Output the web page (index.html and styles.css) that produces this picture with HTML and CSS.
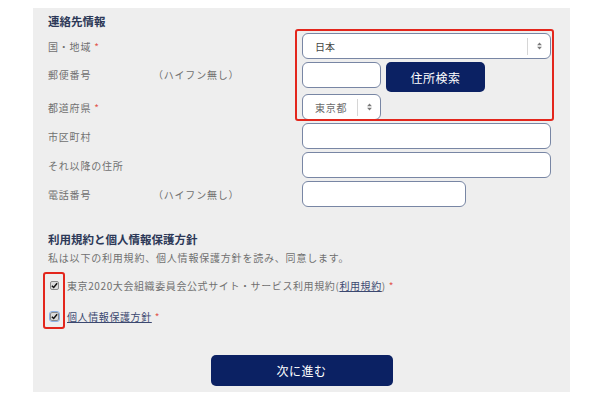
FILE: index.html
```html
<!DOCTYPE html>
<html>

<head>
    <meta charset="UTF-8">
    <title>連絡先情報</title>
    <link rel="stylesheet" href="styles.css">
</head>

<body>
    <div id="panel">
        <div class="section-title">連絡先情報</div>

        <div class="form-rows">
            <div class="row">
                <span class="label">国・地域 <span class="req">*</span></span>
                <span class="hint"></span>
                <div class="select select-country">
                    <span class="select-value">日本</span>
                    <span class="select-arrows">
                        <svg width="5" height="8" viewBox="0 0 6 10"><polygon points="0,4 3,0.5 6,4" /><polygon points="0,6 3,9.5 6,6" /></svg>
                    </span>
                </div>
            </div>
            <div class="row row-tall">
                <span class="label">郵便番号</span>
                <span class="hint">（ハイフン無し）</span>
                <div class="control-group">
                    <input class="text-input input-zip" type="text">
                    <button class="btn btn-search">住所検索</button>
                </div>
            </div>
            <div class="row">
                <span class="label">都道府県 <span class="req">*</span></span>
                <span class="hint"></span>
                <div class="select select-pref">
                    <span class="select-value muted">東京都</span>
                    <span class="select-arrows">
                        <svg width="5" height="8" viewBox="0 0 6 10"><polygon points="0,4 3,0.5 6,4" /><polygon points="0,6 3,9.5 6,6" /></svg>
                    </span>
                </div>
            </div>
            <div class="row">
                <span class="label">市区町村</span>
                <span class="hint"></span>
                <input class="text-input input-wide" type="text">
            </div>
            <div class="row">
                <span class="label">それ以降の住所</span>
                <span class="hint"></span>
                <input class="text-input input-wide" type="text">
            </div>
            <div class="row">
                <span class="label">電話番号</span>
                <span class="hint">（ハイフン無し）</span>
                <input class="text-input input-phone" type="text">
            </div>
        </div>

        <div class="section-title terms-title">利用規約と個人情報保護方針</div>
        <div class="terms-desc">私は以下の利用規約、個人情報保護方針を読み、同意します。</div>

        <label class="check-row check-first">
            <span class="check-box">
                <svg width="7" height="7" viewBox="0 0 8 8"><path d="M1 4.2 L3.1 6.3 L7 1.5" /></svg>
            </span>
            <span class="check-text">東京2020大会組織委員会公式サイト・サービス利用規約(<a class="link">利用規約</a>) <span class="req">*</span></span>
        </label>
        <label class="check-row check-second">
            <span class="check-box focused">
                <svg width="7" height="7" viewBox="0 0 8 8"><path d="M1 4.2 L3.1 6.3 L7 1.5" /></svg>
            </span>
            <span class="check-text"><a class="link">個人情報保護方針</a> <span class="req">*</span></span>
        </label>

        <div class="actions">
            <button class="btn btn-next">次に進む</button>
        </div>

        <!-- red annotation frames -->
        <div class="highlight highlight-address"></div>
        <div class="highlight highlight-checks"></div>
    </div>
</body>

</html>
```

FILE: styles.css
```css
body {
    margin: 0;
    background: #fff;
    font-family: "Noto Sans CJK JP", "Noto Sans", sans-serif;
}

#panel {
    position: relative;
    box-sizing: border-box;
    width: 537px;
    height: 384px;
    margin: 8px 0 0 33px;
    padding: 6px 15px 0 15px;
    background: #eeeeee;
}

.section-title {
    font-size: 11.5px;
    line-height: 14px;
    font-weight: bold;
    color: #2c3857;
}

.form-rows {
    display: flex;
    flex-direction: column;
    gap: 3px;
    margin-top: 5px;
}

.row {
    display: grid;
    grid-template-columns: 105px 149px 1fr;
    align-items: center;
    height: 26px;
}

.row-tall {
    height: 29px;
    align-items: start;
}

.row-tall .label,
.row-tall .hint {
    line-height: 26px;
}

.label,
.hint {
    font-size: 10px;
    letter-spacing: 0.8px;
    color: #707070;
}

.req {
    color: #e2574f;
}

.text-input,
.select {
    box-sizing: border-box;
    height: 26px;
    border: 1px solid #7886a4;
    border-radius: 6px;
    background: #fff;
    padding: 0 10px;
    font-family: inherit;
}

.input-wide,
.select-country {
    width: 249px;
}

.input-phone {
    width: 164px;
}

.input-zip,
.select-pref {
    width: 79px;
}

.control-group {
    display: flex;
    gap: 5px;
}

.select {
    display: flex;
    align-items: center;
    padding: 0;
}

.select-value {
    flex-grow: 1;
    padding-left: 12px;
    font-size: 10px;
    color: #444;
}

.select-value.muted {
    color: #6b6b6b;
    letter-spacing: 0.8px;
}

.select-arrows {
    display: flex;
    align-items: center;
    justify-content: center;
    width: 22px;
    height: 17px;
    border-left: 1px solid #d6d6d6;
}

.select-arrows svg {
    fill: #7a7a7a;
}

.btn {
    border: none;
    border-radius: 5px;
    background: #0b2163;
    color: #fff;
    font-family: inherit;
    cursor: pointer;
}

.btn-search {
    width: 99px;
    height: 30px;
    font-size: 12px;
    letter-spacing: 0.5px;
}

.terms-title {
    margin-top: 25px;
}

.terms-desc {
    margin-top: 5px;
    font-size: 10px;
    line-height: 14px;
    letter-spacing: 0.8px;
    color: #707070;
}

.check-row {
    display: flex;
    align-items: center;
    gap: 8px;
    height: 14px;
    padding-left: 2px;
    font-size: 10px;
    letter-spacing: 0.6px;
    color: #707070;
}

.check-first {
    margin-top: 13px;
}

.check-second {
    margin-top: 17px;
}

.check-box {
    display: flex;
    align-items: center;
    justify-content: center;
    box-sizing: border-box;
    width: 9px;
    height: 9px;
    border: 1px solid #8a8a8a;
    border-radius: 2px;
    background: #dcdcdc;
}

.check-box.focused {
    outline: 1.5px solid #8fb2e6;
}

.check-box svg path {
    fill: none;
    stroke: #111;
    stroke-width: 1.7;
}

.link {
    color: #3b4870;
    text-decoration: underline;
}

.actions {
    display: flex;
    justify-content: center;
    margin-top: 32px;
}

.btn-next {
    width: 182px;
    height: 31px;
    font-size: 12px;
    letter-spacing: 0.5px;
}

.highlight {
    position: absolute;
    border: 2px solid #e3261c;
    border-radius: 3px;
}

.highlight-address {
    left: 262px;
    top: 21px;
    width: 255px;
    height: 88px;
}

.highlight-checks {
    left: 10px;
    top: 264px;
    width: 18px;
    height: 53px;
}
```
